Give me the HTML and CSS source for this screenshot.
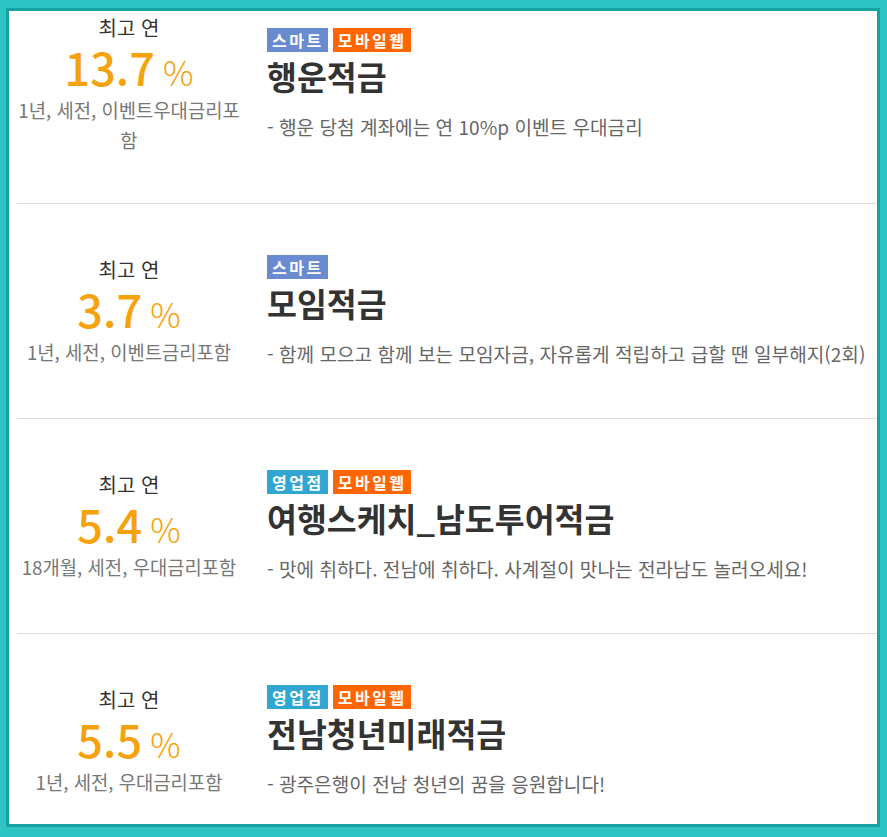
FILE: index.html
```html
<!DOCTYPE html>
<html lang="ko">
<head>
    <meta charset="UTF-8">
    <meta name="viewport" content="width=device-width, initial-scale=1.0">
    <title>적금 상품</title>
    <link rel="stylesheet" href="styles.css">
</head>
<body>

<div class="frame">
    <ul class="productList">
        <li class="product">
            <div class="rateBox">
                <p class="rateLabel">최고 연</p>
                <p class="rate"><strong>13.7</strong><span>%</span></p>
                <p class="rateCond">1년, 세전, 이벤트우대금리포함</p>
            </div>
            <div class="info">
                <div class="tags">
                    <span class="tag smart">스마트</span>
                    <span class="tag mobile">모바일웹</span>
                </div>
                <h3 class="name">행운적금</h3>
                <p class="desc">- 행운 당첨 계좌에는 연 10%p 이벤트 우대금리</p>
            </div>
        </li>
        <li class="product">
            <div class="rateBox">
                <p class="rateLabel">최고 연</p>
                <p class="rate"><strong>3.7</strong><span>%</span></p>
                <p class="rateCond">1년, 세전, 이벤트금리포함</p>
            </div>
            <div class="info">
                <div class="tags">
                    <span class="tag smart">스마트</span>
                </div>
                <h3 class="name">모임적금</h3>
                <p class="desc">- 함께 모으고 함께 보는 모임자금, 자유롭게 적립하고 급할 땐 일부해지(2회)</p>
            </div>
        </li>
        <li class="product">
            <div class="rateBox">
                <p class="rateLabel">최고 연</p>
                <p class="rate"><strong>5.4</strong><span>%</span></p>
                <p class="rateCond">18개월, 세전, 우대금리포함</p>
            </div>
            <div class="info">
                <div class="tags">
                    <span class="tag branch">영업점</span>
                    <span class="tag mobile">모바일웹</span>
                </div>
                <h3 class="name">여행스케치_남도투어적금</h3>
                <p class="desc">- 맛에 취하다. 전남에 취하다. 사계절이 맛나는 전라남도 놀러오세요!</p>
            </div>
        </li>
        <li class="product">
            <div class="rateBox">
                <p class="rateLabel">최고 연</p>
                <p class="rate"><strong>5.5</strong><span>%</span></p>
                <p class="rateCond">1년, 세전, 우대금리포함</p>
            </div>
            <div class="info">
                <div class="tags">
                    <span class="tag branch">영업점</span>
                    <span class="tag mobile">모바일웹</span>
                </div>
                <h3 class="name">전남청년미래적금</h3>
                <p class="desc">- 광주은행이 전남 청년의 꿈을 응원합니다!</p>
            </div>
        </li>
    </ul>
</div>

</body>
</html>
```

FILE: styles.css
```css
*{margin: 0; padding: 0; box-sizing: border-box;}

body{
    background: #2fc4c4;
    font-family: "Noto Sans CJK KR", "Noto Sans", sans-serif;
    color: #333;
}
.frame{
    height: 819px;
    margin: 8px 7px 0 6px;
    border: 3px solid #17a1a1;
    background: #fff;
    overflow: hidden;
}
/* 위로 조금 스크롤된 목록 */
.productList{
    list-style: none;
    margin-top: -48px;
    padding-left: 8px;
}
.product{
    display: flex;
    align-items: center;
    padding: 51px 0 50px;
    border-bottom: 1px solid #dddddd;
}
.product:first-child{
    padding-bottom: 48px;
}

/* 금리 */
.rateBox{
    width: 224px;
    flex-shrink: 0;
    text-align: center;
}
.rateLabel{
    font-size: 20px;
    line-height: 27px;
    color: #333;
}
.rate{
    display: flex;
    justify-content: center;
    align-items: baseline;
    height: 54px;
    color: #f6a20c;
}
.rate strong{
    font-size: 45px;
    font-weight: 500;
    line-height: 52px;
}
.rate span{
    margin-left: 8px;
    font-size: 34px;
    font-weight: 300;
    line-height: 52px;
}
.rateCond{
    font-size: 18.8px;
    line-height: 30px;
    color: #777;
}

/* 상품정보 */
.info{
    margin-left: 26px;
}
.tags{
    display: flex;
    gap: 5px;
}
.tag{
    height: 24px;
    padding: 0 4px 0 5px;
    font-size: 16px;
    font-weight: 700;
    line-height: 24px;
    letter-spacing: 2.5px;
    color: #fff;
}
.smart{background: #6a8bd0;}
.mobile{background: #ff6600;}
.branch{background: #31a6d1;}

.name{
    margin-top: 2px;
    font-size: 32.5px;
    font-weight: 700;
    line-height: 44px;
    color: #333;
}
.desc{
    margin-top: 15px;
    font-size: 19.1px;
    line-height: 28px;
    color: #666;
}
```
